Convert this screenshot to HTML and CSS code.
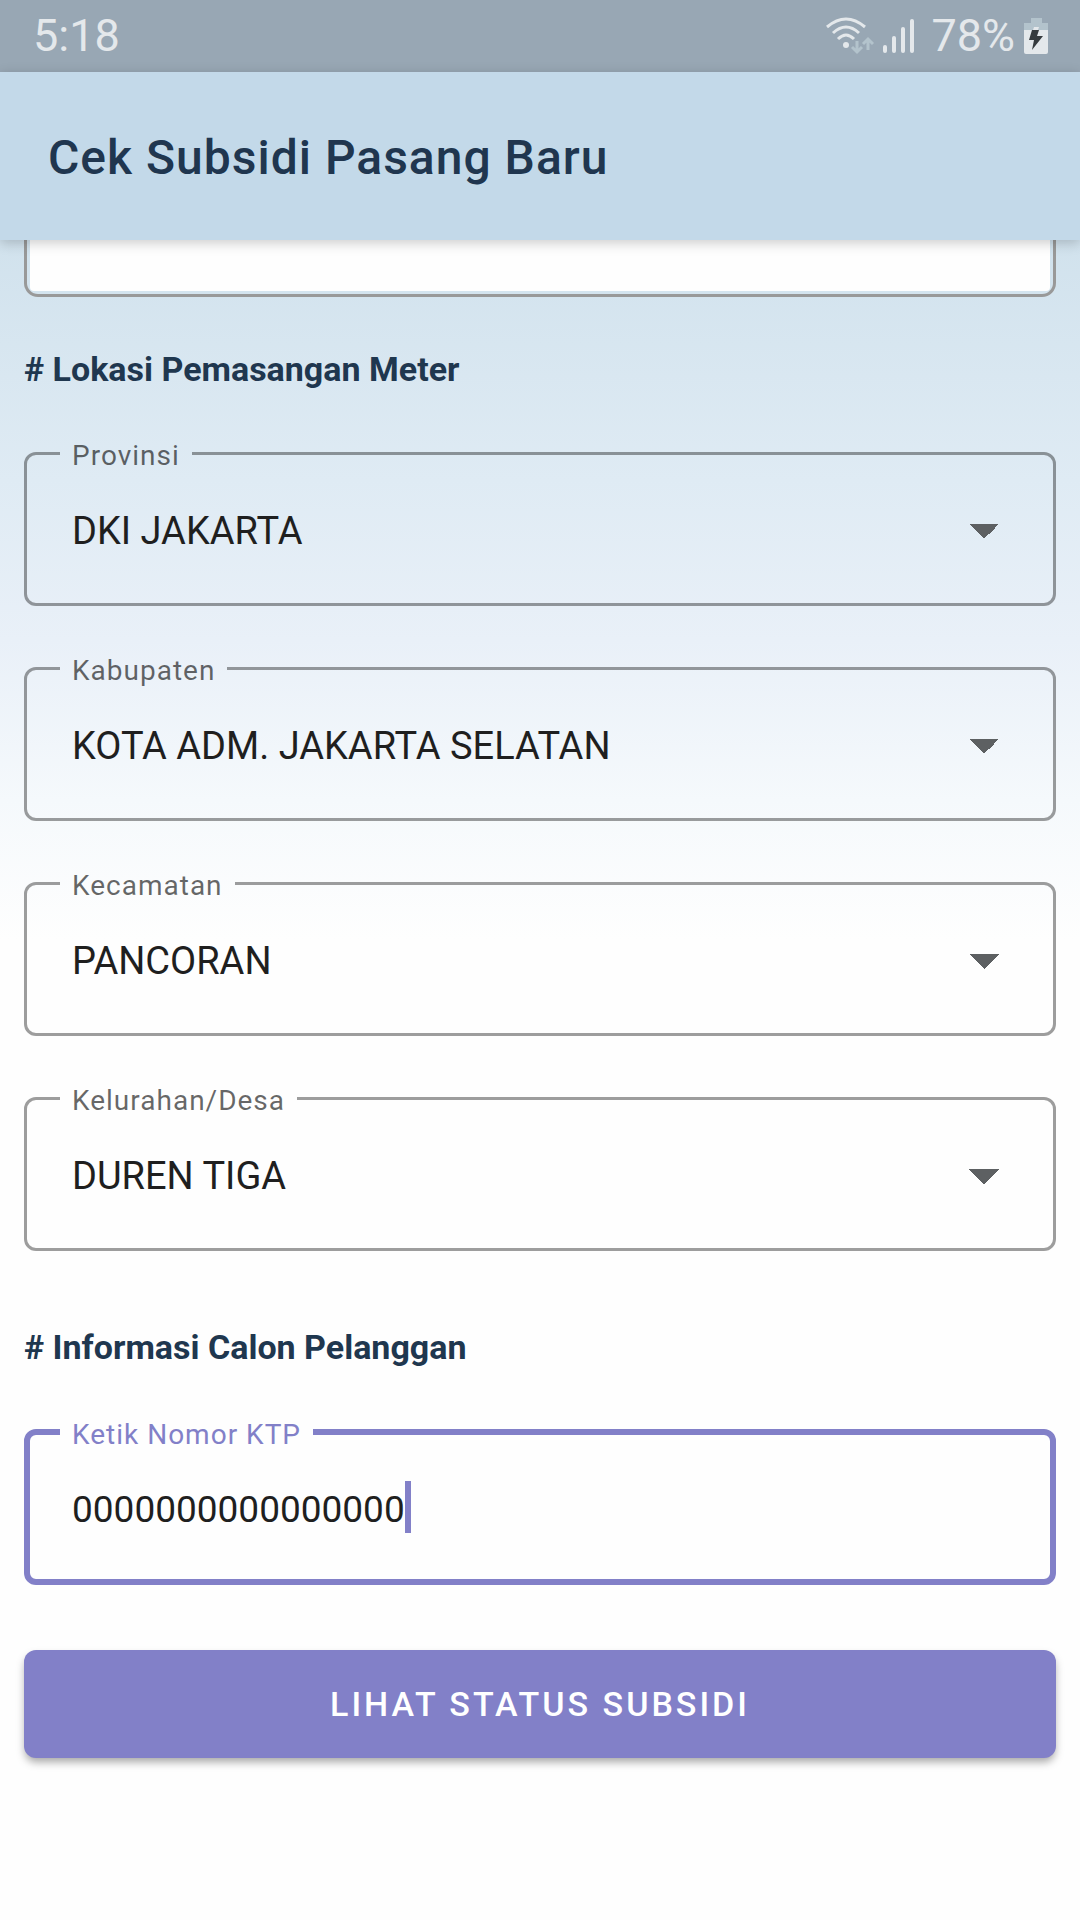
FILE: index.html
```html
<!DOCTYPE html>
<html lang="id">
<head>
<meta charset="utf-8">
<meta name="viewport" content="width=device-width, initial-scale=1">
<title>Cek Subsidi Pasang Baru</title>
<link rel="stylesheet" href="styles.css">
</head>
<body>
<div class="status-bar">
  <span class="status-text">5:18</span>
  <div class="status-icons">
    <svg class="wifi" width="50" height="38" viewBox="0 0 50 38" fill="none" aria-hidden="true">
      <g stroke="#e4e8eb" stroke-width="3">
        <path d="M2 10Q21-6 40 10"/>
        <path d="M8 16Q21 4 34 16"/>
        <path d="M13 22Q21 14 29 22"/>
      </g>
      <circle cx="21" cy="28" r="3" fill="#e4e8eb"/>
      <path d="M32 24v11M27 30l5 5 5-5M43 33V22M38 27l5-5 5 5" stroke="#b3c3cc" stroke-width="3"/>
    </svg>
    <svg class="signal" width="32" height="36" viewBox="0 0 32 36" fill="#e4e8eb" aria-hidden="true">
      <rect x="0" y="27" width="4" height="8" rx="2"/>
      <rect x="9" y="18" width="4" height="17" rx="2"/>
      <rect x="18" y="9" width="4" height="26" rx="2"/>
      <rect x="27" y="1" width="4" height="34" rx="2"/>
    </svg>
    <span class="status-text">78%</span>
    <svg class="battery" width="24" height="36" viewBox="0 0 24 36" aria-hidden="true">
      <path d="M7 0h11v5h6v7H0V5h7z" fill="#b3c3cc"/>
      <path d="M0 12h24v22q0 2-2 2H2q-2 0-2-2z" fill="#e4e8eb"/>
      <path d="M10 9h5l-1 3H9z" fill="#e4e8eb"/>
      <path d="M8 12h7l-2 6h6L8 32l2-10H5z" fill="#363b3e"/>
    </svg>
  </div>
</div>
<header class="app-bar"><h1>Cek Subsidi Pasang Baru</h1></header>
<main>
  <form class="form">
    <div class="scrolled-field"><div class="scrolled-fill"></div></div>

    <h2># Lokasi Pemasangan Meter</h2>
    <div class="fields">
      <fieldset class="field">
        <legend><label for="provinsi">Provinsi</label></legend>
        <select id="provinsi"><option>DKI JAKARTA</option></select>
      </fieldset>
      <fieldset class="field">
        <legend><label for="kabupaten">Kabupaten</label></legend>
        <select id="kabupaten"><option>KOTA ADM. JAKARTA SELATAN</option></select>
      </fieldset>
      <fieldset class="field">
        <legend><label for="kecamatan">Kecamatan</label></legend>
        <select id="kecamatan"><option>PANCORAN</option></select>
      </fieldset>
      <fieldset class="field">
        <legend><label for="kelurahan">Kelurahan/Desa</label></legend>
        <select id="kelurahan"><option>DUREN TIGA</option></select>
      </fieldset>
    </div>

    <h2 class="customer-heading"># Informasi Calon Pelanggan</h2>
    <fieldset class="field field-active">
      <legend><label for="ktp">Ketik Nomor KTP</label></legend>
      <div class="input-row">
        <input id="ktp" type="text" inputmode="numeric" maxlength="16" value="0000000000000000">
        <span class="caret"></span>
      </div>
    </fieldset>

    <button class="submit" type="button">LIHAT STATUS SUBSIDI</button>
  </form>
</main>
</body>
</html>
```
FILE: styles.css
```css
* { box-sizing: border-box; }

body {
  margin: 0;
  min-height: 100vh;
  font-family: Roboto, "Noto Sans", sans-serif;
  color: #1f1f1f;
  background: #fefefe linear-gradient(#c3d9e9 72px, #d1e2ed 240px, #dfebf4 480px, #e9f0f8 640px, #f5f9fc 800px, #fefefe 940px) no-repeat;
}

.status-bar {
  display: flex;
  justify-content: space-between;
  align-items: center;
  height: 72px;
  padding: 0 32px 0 33px;
  background: #98a7b4;
  color: #e4e8eb;
}

.status-text { font-size: 45px; line-height: 72px; }
.status-icons { display: flex; align-items: center; }
.signal { margin: 0 16px 0 8px; }
.battery { margin-left: 9px; }

.app-bar {
  position: relative;
  display: flex;
  align-items: center;
  height: 168px;
  padding: 4px 48px 0;
  background: #c3d9e9;
  box-shadow: 0 3px 12px rgba(0, 0, 0, 0.2);
}

h1 {
  margin: 0;
  font-size: 48px;
  font-weight: 500;
  line-height: 56px;
  letter-spacing: 1px;
  color: #20364f;
}

.form {
  display: flex;
  flex-direction: column;
  padding: 0 24px 40px;
}

.scrolled-field {
  height: 57px;
  padding: 0 3px 3px;
  border: solid #999;
  border-width: 0 3px 3px;
  border-radius: 0 0 14px 14px;
}

.scrolled-fill { height: 51px; background: #fefefe; border-radius: 0 0 4px 4px; }

h2 {
  margin: 52px 0 47px;
  font-size: 34px;
  font-weight: 700;
  line-height: 40px;
  color: #1f374f;
}

.customer-heading { margin: 76px 0 48px; }

.fields { display: flex; flex-direction: column; gap: 45px; }

.field {
  min-width: 0;
  height: 170px;
  margin: 0;
  padding: 0;
  border: 3px solid rgba(0, 0, 0, 0.38);
  border-radius: 12px;
}

.field legend {
  height: 34px;
  margin-left: 33px;
  padding: 0 12px;
  font-size: 28px;
  line-height: 40px;
  letter-spacing: 1px;
  color: rgba(0, 0, 0, 0.6);
}

.field select, .field input {
  appearance: none;
  margin: 0;
  border: 0;
  outline: 0;
  background: none;
  color: #1f1f1f;
  font-family: inherit;
  font-size: 38px;
}

.field select {
  display: block;
  width: 100%;
  height: 120px;
  padding: 2px 45px 0;
  background: conic-gradient(from -45deg at 50% 100%, #5d6062 90deg, transparent 0) no-repeat right 54px top 54px / 30px 15px;
}

.field-active { border: 6px solid #8280c8; }
.field-active legend { margin-left: 30px; color: #8280c8; }

.input-row {
  display: flex;
  align-items: center;
  height: 116px;
  padding-left: 42px;
}

.field .input-row input {
  field-sizing: content;
  height: 52px;
  padding: 4px 0 0;
  font-size: 37px;
  caret-color: transparent;
}

.caret { width: 6px; height: 52px; background: #8280c8; }

.submit {
  height: 108px;
  margin-top: 65px;
  border: 0;
  border-radius: 12px;
  background: #8280c8;
  box-shadow: 0 5px 8px -1px rgba(0, 0, 0, 0.35);
  color: #fff;
  font-family: inherit;
  font-size: 34px;
  font-weight: 500;
  letter-spacing: 3px;
}
```
